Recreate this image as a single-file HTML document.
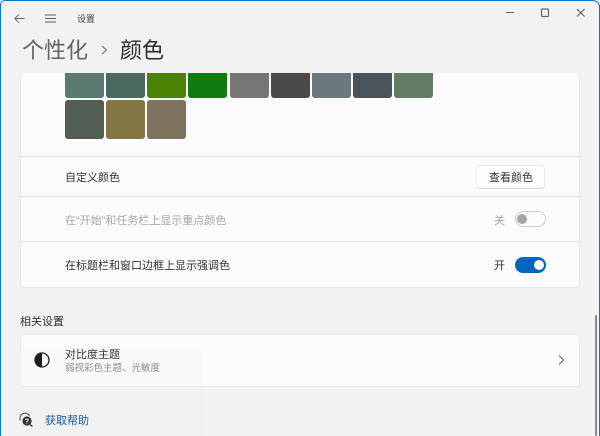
<!DOCTYPE html>
<html lang="zh">
<head>
<meta charset="utf-8">
<style>
*{box-sizing:border-box;margin:0;padding:0}
html,body{width:600px;height:436px;overflow:hidden;background:#f2f2f2}
body{position:relative;font-family:"Liberation Sans","Noto Sans CJK SC",sans-serif;color:#2b2b2b}
.abs{position:absolute}
.t{position:absolute;white-space:nowrap;line-height:1}
.sw{position:absolute;border-radius:0 0 3px 3px;width:39px;height:25px;top:73px}
.sw.r2{top:100px;height:39px;border-radius:3px}
.line{position:absolute;left:21px;width:558px;height:1px;background:#e7e7e7}
</style>
</head>
<body>
<div class="abs" style="left:20px;top:73px;width:560px;height:215px;background:#fbfbfb;border:1px solid #e8e8e8;border-top:0;border-radius:0 0 4px 4px"></div>

<div class="sw" style="left:65px;background:#587a72"></div>
<div class="sw" style="left:106px;background:#486860"></div>
<div class="sw" style="left:147px;background:#498205"></div>
<div class="sw" style="left:188px;background:#107c10"></div>
<div class="sw" style="left:230px;background:#767676"></div>
<div class="sw" style="left:271px;background:#4c4a48"></div>
<div class="sw" style="left:312px;background:#69797e"></div>
<div class="sw" style="left:353px;background:#4a5459"></div>
<div class="sw" style="left:394px;background:#647c64"></div>
<div class="sw r2" style="left:65px;background:#525e54"></div>
<div class="sw r2" style="left:106px;background:#847545"></div>
<div class="sw r2" style="left:147px;background:#7e735f"></div>

<div class="line" style="top:156px"></div>
<div class="line" style="top:196px"></div>
<div class="line" style="top:241px"></div>

<div class="t" style="left:65px;top:173px;font-size:11px;color:#333">自定义颜色</div>
<div class="abs" style="left:476px;top:165px;width:69px;height:24px;background:#fdfdfd;border:1px solid #ececec;border-bottom-color:#d8d8d8;border-radius:4px"></div>
<div class="t" style="left:489px;top:173px;font-size:11px;color:#333">查看颜色</div>

<div class="t" style="left:65px;top:216px;font-size:11px;color:#a6a6a6">在“开始”和任务栏上显示重点颜色</div>
<div class="t" style="left:494px;top:216px;font-size:11px;color:#a6a6a6">关</div>
<div class="abs" style="left:515px;top:211px;width:30.500px;height:16px;border:1px solid #cdcdcd;border-radius:8px;background:#fbfbfb"></div>
<div class="abs" style="left:517px;top:214px;width:10px;height:10px;border-radius:50%;background:#a5a5a5"></div>

<div class="t" style="left:65px;top:261px;font-size:11px;color:#333">在标题栏和窗口边框上显示强调色</div>
<div class="t" style="left:494px;top:261px;font-size:11px;color:#333">开</div>
<div class="abs" style="left:515px;top:257px;width:30.500px;height:16px;border-radius:8px;background:#0067c0"></div>
<div class="abs" style="left:534px;top:260px;width:10px;height:10px;border-radius:50%;background:#fff"></div>

<div class="t" style="left:20px;top:317px;font-size:11px;color:#333">相关设置</div>
<div class="abs" style="left:20px;top:334px;width:560px;height:53px;background:#fbfbfb;border:1px solid #e8e8e8;border-radius:4px"></div>
<div class="abs" style="left:0;top:348px;width:201px;height:88px;border-radius:6px 6px 0 0;background:rgba(245,245,245,.2);box-shadow:1px 0 1px rgba(0,0,0,.025)"></div>

<svg class="abs" style="left:33px;top:351px" width="18" height="18" viewBox="0 0 18 18">
<circle cx="9" cy="9" r="7" fill="#fff" stroke="#1c1c1c" stroke-width="1.3"/>
<path d="M9 2a7 7 0 0 0 0 14z" fill="#1c1c1c"/>
</svg>
<div class="t" style="left:65px;top:350px;font-size:11px;color:#333">对比度主题</div>
<div class="t" style="left:65px;top:364px;font-size:9.500px;color:#8a8a8a">弱视彩色主题、光敏度</div>
<svg class="abs" style="left:556px;top:354px" width="10" height="12" viewBox="0 0 10 12">
<path d="M3 1.500 7.500 6 3 10.500" fill="none" stroke="#666" stroke-width="1.100"/>
</svg>

<svg class="abs" style="left:18px;top:412px" width="16" height="16" viewBox="0 0 16 16">
<path d="M2 8.500V6a5 5 0 0 1 9.500-2" fill="none" stroke="#444" stroke-width="1"/>
<circle cx="9" cy="9" r="4.600" fill="#333"/>
<path d="M12 12.500 14.500 14.500" stroke="#333" stroke-width="1.300"/>
<text x="9" y="11.500" font-size="7" font-weight="bold" text-anchor="middle" fill="#fff" font-family="Liberation Sans">?</text>
</svg>
<div class="t" style="left:45px;top:416px;font-size:11px;color:#1a5ba8">获取帮助</div>

<svg class="abs" style="left:13px;top:12px" width="13" height="13" viewBox="0 0 13 13">
<path d="M11.500 6.500H2M6 2.300 1.800 6.500 6 10.700" fill="none" stroke="#666" stroke-width="1"/>
</svg>
<svg class="abs" style="left:44px;top:13px" width="13" height="11" viewBox="0 0 13 11">
<path d="M1 2h11M1 5.500h11M1 9h11" fill="none" stroke="#5c5c5c" stroke-width="1"/>
</svg>
<div class="t" style="left:77px;top:15px;font-size:9px;color:#444">设置</div>

<div class="t" style="left:22px;top:40px;font-size:22px;color:#636363">个性化</div>
<svg class="abs" style="left:98px;top:43px" width="12" height="14" viewBox="0 0 12 14">
<path d="M4 3 8.500 7 4 11" fill="none" stroke="#666" stroke-width="1.100"/>
</svg>
<div class="t" style="left:120px;top:40px;font-size:22px;color:#2b2b2b">颜色</div>

<svg class="abs" style="left:500px;top:6px" width="90" height="14" viewBox="0 0 90 14">
<path d="M6 6.500h8" stroke="#666" stroke-width="1"/>
<rect x="41.500" y="3" width="7" height="7.500" rx="1" fill="none" stroke="#666" stroke-width="1.200"/>
<path d="M77 3 84.500 10.500M84.500 3 77 10.500" stroke="#555" stroke-width="1"/>
</svg>

<div class="abs" style="left:595px;top:315px;width:2px;height:121px;background:#8a8a8a;border-radius:1px"></div>

<div class="abs" style="left:0;top:0;width:600px;height:436px;border:1px solid #0078d4;border-width:1px 1px 0 1.500px;border-radius:5px 7px 0 0;pointer-events:none"></div>
</body>
</html>
